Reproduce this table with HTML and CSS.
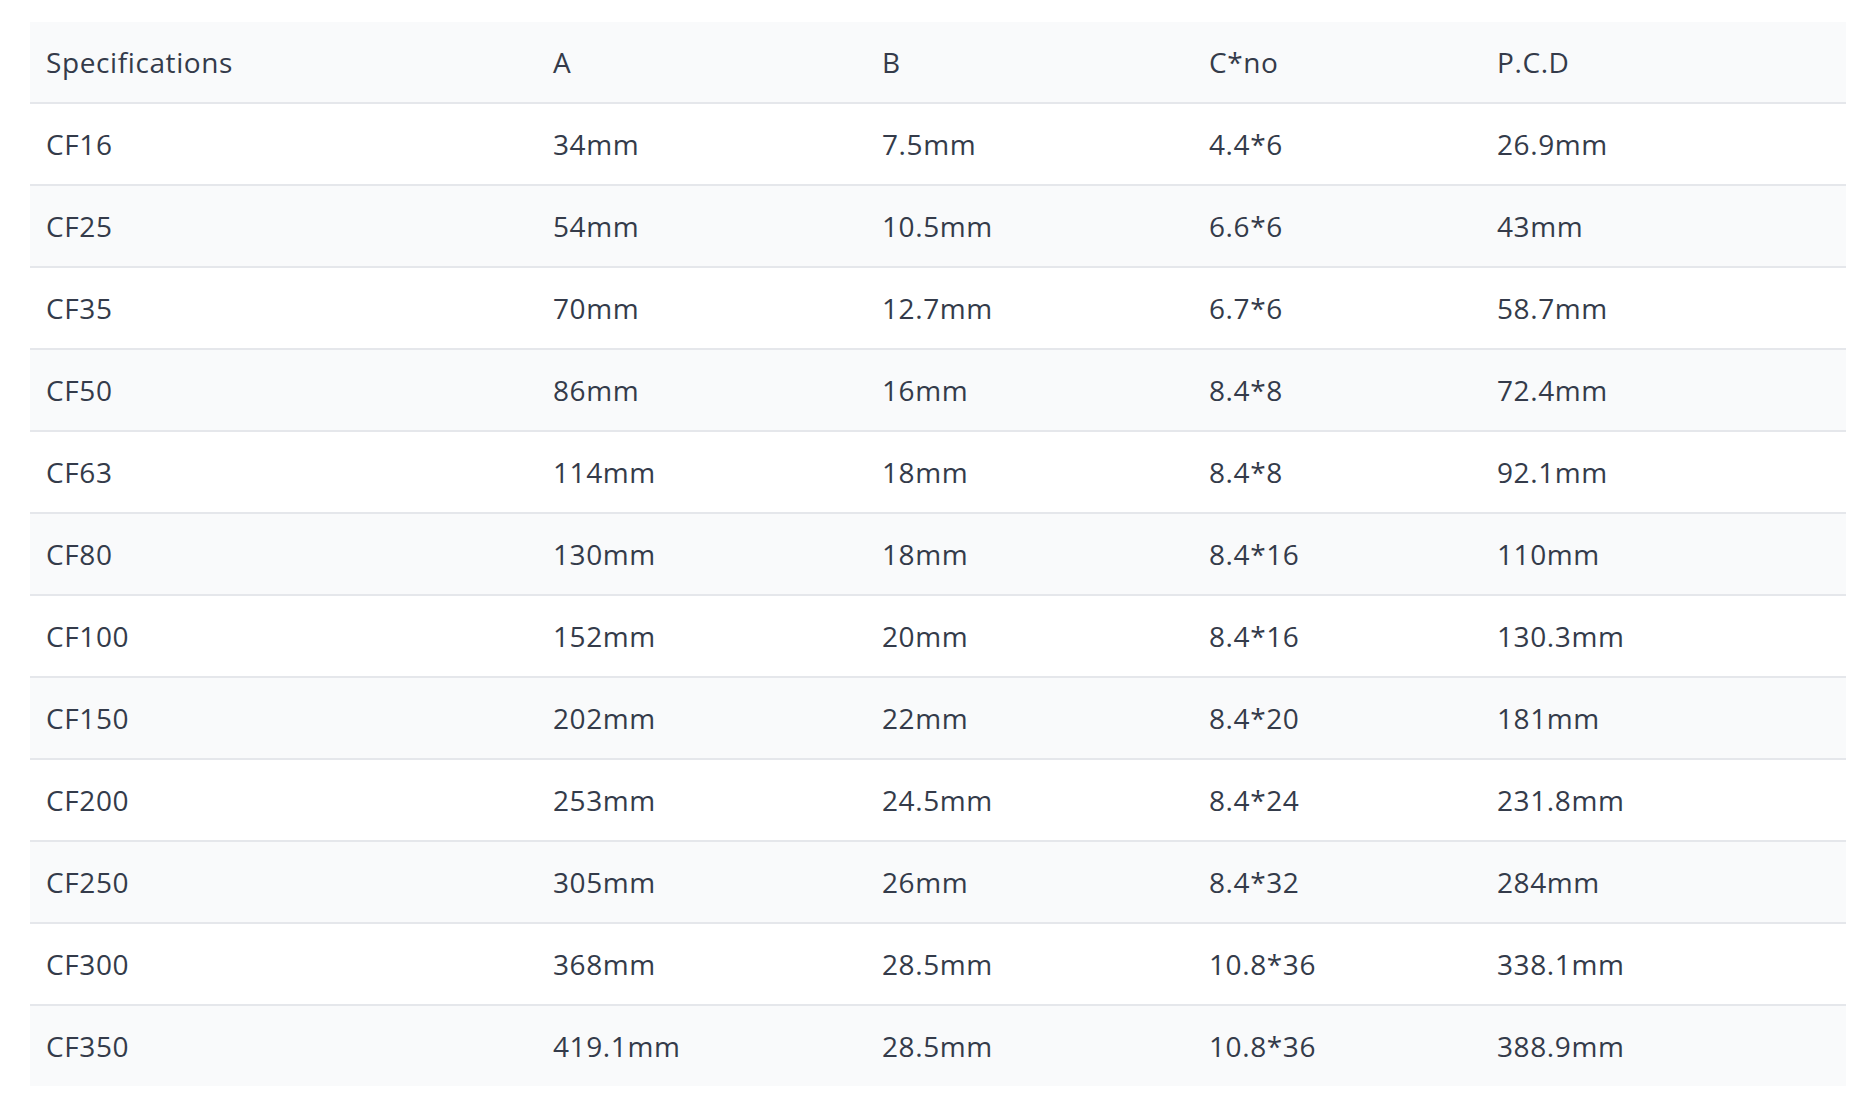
FILE: index.html
```html
<!DOCTYPE html>
<html lang="en">
<head>
<meta charset="utf-8">
<title>Specifications</title>
<link rel="stylesheet" href="styles.css">
</head>
<body>
<div class="page">
  <table class="spec-table">
    <colgroup>
      <col class="c1"><col class="c2"><col class="c3"><col class="c4"><col class="c5">
    </colgroup>
    <thead>
      <tr><th>Specifications</th><th>A</th><th>B</th><th>C*no</th><th>P.C.D</th></tr>
    </thead>
    <tbody>
      <tr><td>CF16</td><td>34mm</td><td>7.5mm</td><td>4.4*6</td><td>26.9mm</td></tr>
      <tr><td>CF25</td><td>54mm</td><td>10.5mm</td><td>6.6*6</td><td>43mm</td></tr>
      <tr><td>CF35</td><td>70mm</td><td>12.7mm</td><td>6.7*6</td><td>58.7mm</td></tr>
      <tr><td>CF50</td><td>86mm</td><td>16mm</td><td>8.4*8</td><td>72.4mm</td></tr>
      <tr><td>CF63</td><td>114mm</td><td>18mm</td><td>8.4*8</td><td>92.1mm</td></tr>
      <tr><td>CF80</td><td>130mm</td><td>18mm</td><td>8.4*16</td><td>110mm</td></tr>
      <tr><td>CF100</td><td>152mm</td><td>20mm</td><td>8.4*16</td><td>130.3mm</td></tr>
      <tr><td>CF150</td><td>202mm</td><td>22mm</td><td>8.4*20</td><td>181mm</td></tr>
      <tr><td>CF200</td><td>253mm</td><td>24.5mm</td><td>8.4*24</td><td>231.8mm</td></tr>
      <tr><td>CF250</td><td>305mm</td><td>26mm</td><td>8.4*32</td><td>284mm</td></tr>
      <tr><td>CF300</td><td>368mm</td><td>28.5mm</td><td>10.8*36</td><td>338.1mm</td></tr>
      <tr><td>CF350</td><td>419.1mm</td><td>28.5mm</td><td>10.8*36</td><td>388.9mm</td></tr>
    </tbody>
  </table>
</div>
</body>
</html>
```

FILE: styles.css
```css
html, body {
  margin: 0;
  padding: 0;
  background: #ffffff;
}

.page {
  padding: 22px 24px 0 30px;
}

.spec-table {
  width: 1816px;
  table-layout: fixed;
  border-collapse: collapse;
  font-family: "Open Sans", "Liberation Sans", sans-serif;
  font-size: 28px;
  letter-spacing: 0.6px;
  color: #343b4a;
}

.c1 { width: 507px; }
.c2 { width: 329px; }
.c3 { width: 327px; }
.c4 { width: 288px; }
.c5 { width: 365px; }

.spec-table th,
.spec-table td {
  text-align: left;
  font-weight: 500;
  padding: 20px 16px;
  line-height: 40px;
  height: 40px;
  white-space: nowrap;
}

.spec-table thead tr {
  background: #f9fafb;
  border-bottom: 2px solid #e5e7eb;
}

.spec-table tbody tr {
  border-bottom: 2px solid #e5e7eb;
}

.spec-table tbody tr:last-child {
  border-bottom: none;
}

.spec-table tbody tr:nth-child(even) {
  background: #f9fafb;
}
```
